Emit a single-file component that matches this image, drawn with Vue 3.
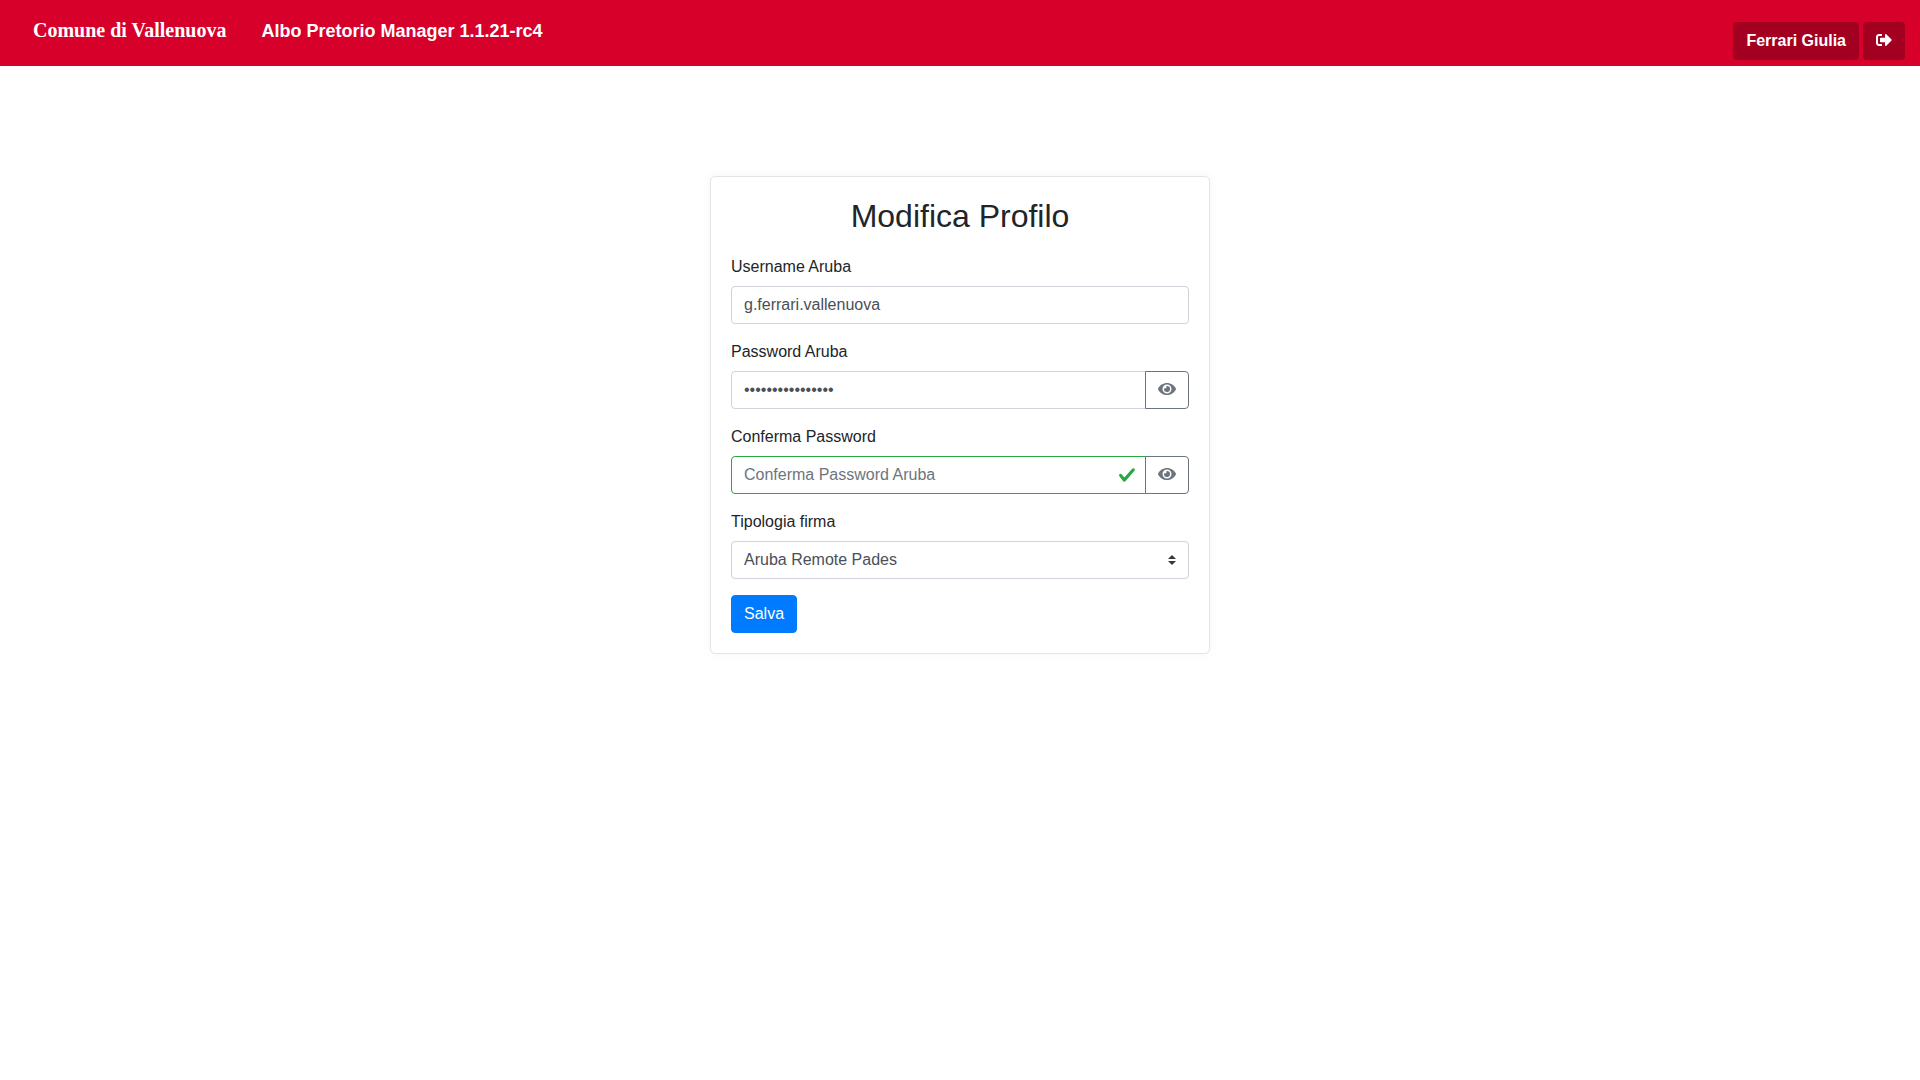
<template>
  <div class="app-page">
    <header class="navbar">
      <a href="#" class="brand">Comune di Vallenuova</a>
      <span class="app-title">Albo Pretorio Manager 1.1.21-rc4</span>
      <div class="user-actions">
        <button type="button" class="btn btn-user">Ferrari Giulia</button>
        <button type="button" class="btn btn-user" aria-label="Esci">
          <svg class="icon-logout" viewBox="0 0 512 512" aria-hidden="true">
            <path
              d="M497 273L329 441c-15 15-41 4.500-41-17v-96H152c-13.300 0-24-10.700-24-24v-96c0-13.300 10.700-24 24-24h136V88c0-21.400 25.900-32 41-17l168 168c9.300 9.400 9.300 24.600 0 34zM192 436v-40c0-6.600-5.400-12-12-12H96c-17.700 0-32-14.300-32-32V160c0-17.700 14.300-32 32-32h84c6.600 0 12-5.400 12-12V76c0-6.600-5.400-12-12-12H96c-53 0-96 43-96 96v192c0 53 43 96 96 96h84c6.600 0 12-5.400 12-12z"
            />
          </svg>
        </button>
      </div>
    </header>

    <main class="content">
      <form class="card" @submit.prevent>
        <h2 class="card-title">Modifica Profilo</h2>

        <div class="form-group">
          <label for="username">Username Aruba</label>
          <input id="username" v-model="username" type="text" class="form-control" />
        </div>

        <div v-for="field in passwordFields" :key="field.id" class="form-group">
          <label :for="field.id">{{ field.label }}</label>
          <div class="input-group">
            <div class="input-wrap">
              <input
                :id="field.id"
                v-model="field.value"
                :type="field.visible ? 'text' : 'password'"
                :placeholder="field.placeholder"
                class="form-control"
                :class="{ 'is-valid': field.valid }"
                autocomplete="new-password"
              />
              <svg v-if="field.valid" class="icon-valid" viewBox="0 0 8 8" aria-hidden="true">
                <path
                  d="M2.300 6.730L.6 4.530c-.4-1.040.46-1.400 1.100-.8l1.100 1.400 3.400-3.800c.6-.63 1.600-.27 1.200.7l-4 4.600c-.43.5-.8.4-1.100.1z"
                />
              </svg>
            </div>
            <button
              type="button"
              class="btn btn-eye"
              aria-label="Mostra password"
              @click="field.visible = !field.visible"
            >
              <svg class="icon-eye" viewBox="0 0 576 512" aria-hidden="true">
                <path
                  d="M572.520 241.400C518.290 135.590 410.930 64 288 64S57.680 135.640 3.480 241.410a32.350 32.350 0 0 0 0 29.190C57.710 376.410 165.070 448 288 448s230.320-71.640 284.520-177.410a32.350 32.350 0 0 0 0-29.190zM288 400a144 144 0 1 1 144-144 143.930 143.930 0 0 1-144 144zm0-240a95.310 95.310 0 0 0-25.310 3.790 47.850 47.850 0 0 1-66.900 66.900A95.780 95.780 0 1 0 288 160z"
                />
              </svg>
            </button>
          </div>
        </div>

        <div class="form-group">
          <label for="firma">Tipologia firma</label>
          <div class="input-wrap">
            <select id="firma" v-model="firma" class="form-control">
              <option v-for="tipo in tipologie" :key="tipo" :value="tipo">{{ tipo }}</option>
            </select>
            <svg class="icon-select" viewBox="0 0 4 5" aria-hidden="true">
              <path d="M2 0L0 2h4zm0 5L0 3h4z" />
            </svg>
          </div>
        </div>

        <button type="submit" class="btn btn-primary">Salva</button>
      </form>
    </main>
  </div>
</template>

<script setup>
import { reactive, ref } from "vue";

const username = ref("g.ferrari.vallenuova");
const tipologie = ["Aruba Remote Pades"];
const firma = ref(tipologie[0]);

const passwordFields = reactive([
  {
    id: "password",
    label: "Password Aruba",
    placeholder: "Password Aruba",
    value: "xxxxxxxxxxxxxxxx",
    visible: false,
    valid: false,
  },
  {
    id: "conferma",
    label: "Conferma Password",
    placeholder: "Conferma Password Aruba",
    value: "",
    visible: false,
    valid: true,
  },
]);
</script>

<style>
body {
  margin: 0;
  background: #fff;
}
</style>

<style scoped>
.app-page,
.app-page * {
  box-sizing: border-box;
}

.app-page {
  font-family: "Liberation Sans", Arial, sans-serif;
  font-size: 16px;
  line-height: 24px;
  color: #212529;
}

.navbar {
  display: flex;
  align-items: flex-start;
  height: 66px;
  padding: 0 15px 0 33px;
  background: #d6002b;
  color: #fff;
}

.brand {
  margin-right: 35px;
  padding-top: 15px;
  font-family: "Liberation Serif", "Times New Roman", serif;
  font-size: 20px;
  font-weight: 700;
  line-height: 30px;
  color: #fff;
  text-decoration: none;
}

.app-title {
  padding-top: 16px;
  font-size: 18px;
  font-weight: 700;
  line-height: 30px;
}

.user-actions {
  display: flex;
  gap: 4px;
  margin-left: auto;
  padding-top: 22px;
}

.btn {
  height: 38px;
  padding: 6px 12px;
  border: 1px solid transparent;
  border-radius: 4px;
  font-family: inherit;
  font-size: 16px;
  line-height: 24px;
  cursor: pointer;
}

.btn svg {
  display: block;
  height: 16px;
  margin-bottom: 2px;
  fill: currentColor;
}

.btn-user {
  background: #a30021;
  color: #fff;
  font-weight: 700;
}

.icon-logout {
  width: 16px;
}

.content {
  display: flex;
  justify-content: center;
  padding: 110px 15px;
}

.card {
  width: 100%;
  max-width: 500px;
  padding: 20px;
  background: #fff;
  border: 1px solid #e3e4e5;
  border-radius: 5px;
  box-shadow: 0 0 10px rgba(0, 0, 0, 0.05);
}

.card-title {
  margin: 0 0 20px;
  font-size: 32px;
  font-weight: 500;
  line-height: 38px;
  text-align: center;
}

.form-group {
  margin-bottom: 16px;
}

.form-group label {
  display: block;
  width: fit-content;
  margin-bottom: 7px;
}

.form-control {
  display: block;
  width: 100%;
  height: 38px;
  margin: 0;
  padding: 6px 12px;
  background: #fff;
  border: 1px solid #ced4da;
  border-radius: 4px;
  font-family: inherit;
  font-size: 16px;
  line-height: 24px;
  color: #495057;
  appearance: none;
}

.form-control::placeholder {
  color: #6c757d;
  opacity: 1;
}

.form-control.is-valid {
  padding-right: 36px;
  border-color: #28a745;
}

.input-group {
  display: flex;
}

.input-wrap {
  position: relative;
  flex: 1;
}

.input-group .form-control {
  border-top-right-radius: 0;
  border-bottom-right-radius: 0;
}

.btn-eye {
  position: relative;
  margin-left: -1px;
  background: #fff;
  border-color: #6c757d;
  border-top-left-radius: 0;
  border-bottom-left-radius: 0;
  color: #6c757d;
}

.icon-eye {
  width: 18px;
}

/* drawn over the right edge of their control */
.icon-valid {
  position: absolute;
  top: 10px;
  right: 10px;
  width: 18px;
  height: 18px;
  fill: #28a745;
}

.icon-select {
  position: absolute;
  top: 14px;
  right: 13px;
  width: 8px;
  height: 10px;
  fill: #343a40;
  pointer-events: none;
}

.btn-primary {
  display: block;
  background: #007bff;
  border-color: #007bff;
  color: #fff;
}
</style>
